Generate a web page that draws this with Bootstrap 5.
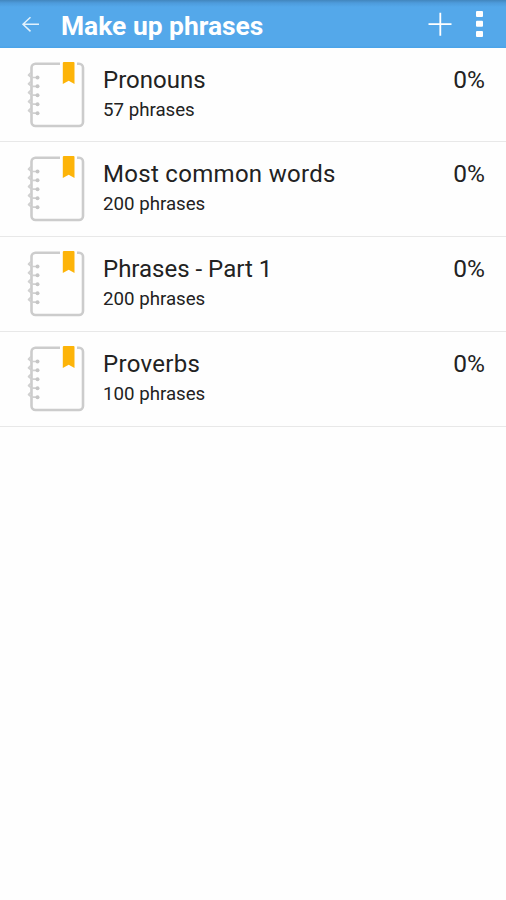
<!DOCTYPE html>
<html lang="en">
<head>
<meta charset="utf-8">
<meta name="viewport" content="width=device-width, initial-scale=1">
<title>Make up phrases</title>
<link rel="stylesheet" href="https://cdn.jsdelivr.net/npm/bootstrap@5.3.0/dist/css/bootstrap.min.css">
<style>
body { font-family: Roboto, "Liberation Sans", sans-serif; color: #222; background: #fefefe; }
.topbar { height: 47.500px; background: linear-gradient(#4286bd 0, #4d9bdb 3px, #54a8ea 7px, #54a8ea 46px, #4ba4e9 47px); }
.back-btn { width: 61px; height: 47px; }
.topbar h1 { font-size: 26.400px; line-height: 48px; padding-top: 2px; }
.phrase-row { height: 94.750px; border-bottom: 1px solid #e8e8e8; }
.book { width: 103px; height: 93px; }
.row-title { font-size: 24px; line-height: 30px; padding-top: 17px; }
.row-title.roomy { letter-spacing: .3px; }
.row-count { font-size: 18.700px; line-height: 24px; padding-top: 3px; }
.percent { font-size: 24.500px; line-height: 30px; padding: 17px 21px 0 0; }
</style>
</head>
<body>
<svg class="d-none" aria-hidden="true">
  <symbol id="notebook" viewBox="0 0 103 93">
    <path d="M60 15.700H35.500a4 4 0 0 0-4 4V74a4 4 0 0 0 4 4H79a4 4 0 0 0 4-4V19.700a4 4 0 0 0-4-4h-2" fill="none" stroke="#ccc" stroke-width="2.600"/>
    <path d="M37 29.500H31.500L28.500 27l2.500-2.500M37 38.300H31.500L28.500 35.800l2.500-2.500M37 47.200H31.500L28.500 44.700l2.500-2.500M37 56.200H31.500L28.500 53.700l2.500-2.500M37 65.200H31.500L28.500 62.700l2.500-2.500" fill="none" stroke="#d0d0d0" stroke-width="1.700" stroke-linejoin="round"/>
    <g fill="#c6c6c6"><circle cx="37.500" cy="29.500" r="2"/><circle cx="37.500" cy="38.300" r="2"/><circle cx="37.500" cy="47.200" r="2"/><circle cx="37.500" cy="56.200" r="2"/><circle cx="37.500" cy="65.200" r="2"/></g>
    <path d="M64 14h9.500q1 0 1 1V36L68.700 32.700 62.800 36V15q0-1 1.200-1z" fill="#fdb409"/>
  </symbol>
</svg>
<header class="topbar d-flex text-white">
  <a class="back-btn flex-shrink-0 text-white" href="#" aria-label="Back"><svg class="d-block" width="61" height="47" fill="none" stroke="#e2f1fc" stroke-width="1.500"><path d="M39 24.300H23M30.500 17.200L23 24.300L30.500 31.400"/></svg></a>
  <h1 class="fw-bold m-0 text-nowrap">Make up phrases</h1>
  <div class="ms-auto d-flex">
    <a href="#" aria-label="Add"><svg class="d-block" width="44" height="47" stroke="#fff" stroke-width="1.800"><path d="M6.500 24.200h23M18.300 12.700v23"/></svg></a>
    <a href="#" aria-label="More"><svg class="d-block" width="40" height="47" fill="#fff"><rect x="10" y="11" width="7" height="6" rx="1"/><rect x="10" y="20.700" width="7" height="6" rx="1"/><rect x="10" y="31" width="7" height="6" rx="1"/></svg></a>
  </div>
</header>
<main>
  <div class="phrase-row d-flex">
    <svg class="book flex-shrink-0"><use href="#notebook"/></svg>
    <div class="flex-grow-1"><div class="row-title">Pronouns</div><div class="row-count">57 phrases</div></div>
    <div class="percent">0%</div>
  </div>
  <div class="phrase-row d-flex">
    <svg class="book flex-shrink-0"><use href="#notebook"/></svg>
    <div class="flex-grow-1"><div class="row-title roomy">Most common words</div><div class="row-count">200 phrases</div></div>
    <div class="percent">0%</div>
  </div>
  <div class="phrase-row d-flex">
    <svg class="book flex-shrink-0"><use href="#notebook"/></svg>
    <div class="flex-grow-1"><div class="row-title">Phrases - Part 1</div><div class="row-count">200 phrases</div></div>
    <div class="percent">0%</div>
  </div>
  <div class="phrase-row d-flex">
    <svg class="book flex-shrink-0"><use href="#notebook"/></svg>
    <div class="flex-grow-1"><div class="row-title roomy">Proverbs</div><div class="row-count">100 phrases</div></div>
    <div class="percent">0%</div>
  </div>
</main>
<script src="https://cdn.jsdelivr.net/npm/bootstrap@5.3.0/dist/js/bootstrap.bundle.min.js"></script>
</body>
</html>
